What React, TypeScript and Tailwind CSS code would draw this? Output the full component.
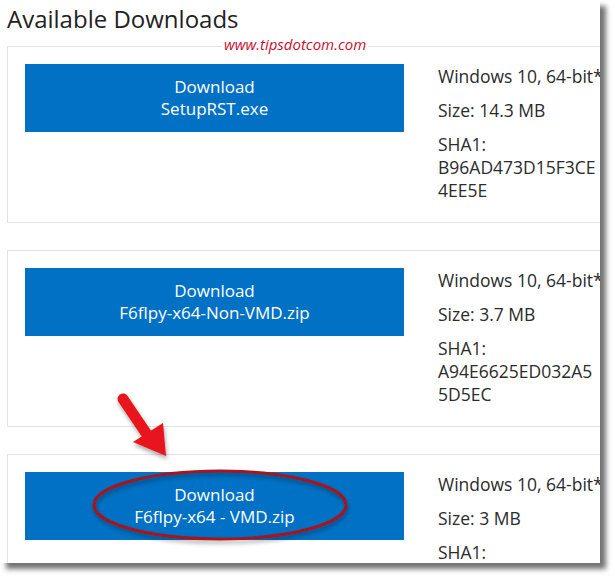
import React from 'react';

type Download = {
  file: string;
  os: string;
  size: string;
  sha: string[];
};

const downloads: Download[] = [
  { file: 'SetupRST.exe', os: 'Windows 10, 64-bit*', size: '14.3 MB', sha: ['B96AD473D15F3CE', '4EE5E'] },
  { file: 'F6flpy-x64-Non-VMD.zip', os: 'Windows 10, 64-bit*', size: '3.7 MB', sha: ['A94E6625ED032A5', '5D5EC'] },
  // hash is below the fold in the screenshot
  { file: 'F6flpy-x64 - VMD.zip', os: 'Windows 10, 64-bit*', size: '3 MB', sha: [] },
];

function DownloadCard({ d }: { d: Download }) {
  return (
    <div className="ml-[7px] flex h-[177px] w-[640px] shrink-0 items-start border border-[#e3e3e3] bg-white pl-[17px] pt-[17px]">
      <button className="flex h-[68px] w-[379px] shrink-0 flex-col items-center justify-center bg-[#0071c5] text-[17px] leading-[22px] text-white">
        <span>Download</span>
        <span>{d.file}</span>
      </button>
      <div className="ml-[34px] pt-[1px] text-[17.5px] leading-[23px] text-[#2b2b2b] whitespace-nowrap">
        <p className="mb-[11px]">{d.os}</p>
        <p className="mb-[11px]">Size: {d.size}</p>
        <p>
          SHA1:
          {d.sha.map((s) => (
            <React.Fragment key={s}>
              <br />
              {s}
            </React.Fragment>
          ))}
        </p>
      </div>
    </div>
  );
}

export default function App() {
  return (
    <div className="h-[579px] w-[615px] bg-white" style={{ fontFamily: '"Open Sans", "Noto Sans", sans-serif' }}>
      <div className="relative h-[563px] w-[600px] overflow-hidden bg-white shadow-[6px_6px_5px_rgba(0,0,0,0.55)]">
        <h2 className="pl-[7px] pt-[3px] text-[24px] leading-[32px] text-[#222]">Available Downloads</h2>
        <div className="mt-[11px] flex flex-col gap-[27px]">
          {downloads.map((d) => (
            <DownloadCard key={d.file} d={d} />
          ))}
        </div>

        <span className="absolute left-[222px] top-[35px] bg-white px-[2px] text-[15px] italic leading-[18px] text-[#c8102e]">
          www.tipsdotcom.com
        </span>

        <svg className="pointer-events-none absolute left-0 top-0" width="600" height="563">
          <defs>
            <filter id="sh" x="-20%" y="-20%" width="140%" height="160%">
              <feDropShadow dx="1" dy="3" stdDeviation="2" floodColor="#000" floodOpacity="0.35" />
            </filter>
          </defs>
          <g filter="url(#sh)">
            <line x1="123" y1="399" x2="146" y2="433" stroke="#e8141b" strokeWidth="11" strokeLinecap="round" />
            <polygon points="133,442 163,423 166,456" fill="#e8141b" />
            <ellipse cx="220" cy="505" rx="126" ry="34" fill="none" stroke="#a8121c" strokeWidth="3" />
          </g>
        </svg>
      </div>
    </div>
  );
}
